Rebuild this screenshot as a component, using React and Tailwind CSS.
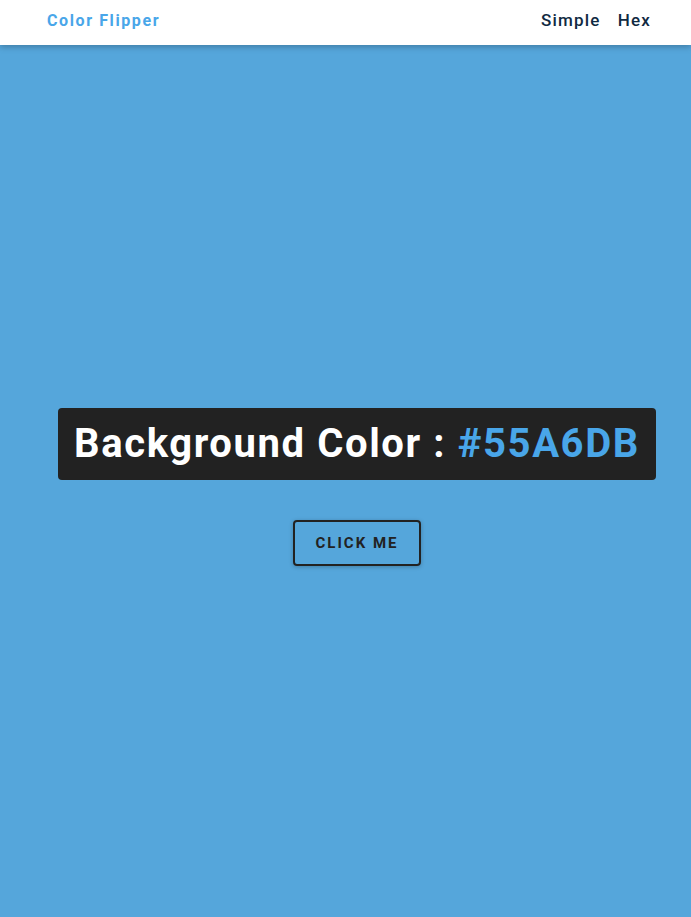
import React, { useState } from "react";

const App = () => {
  const [color] = useState("#55A6DB");

  return (
    <div
      className="min-h-screen w-full bg-[#55A6DB]"
      style={{ fontFamily: "Roboto, 'Open Sans', sans-serif" }}
    >
      {/* Navbar */}
      <nav className="h-[45px] bg-white shadow-[0_2px_6px_rgba(0,0,0,0.25)] flex items-center justify-between pl-[47px] pr-[40px] pb-[3px] relative z-10">
        <h4 className="text-[16px] font-bold tracking-[1.6px] text-[#49A6E9]">
          Color Flipper
        </h4>
        <ul className="flex items-center gap-[17px]">
          <li className="text-[17px] font-medium tracking-[1.2px] text-[#102A42]">Simple</li>
          <li className="text-[17px] font-medium tracking-[1.2px] text-[#102A42]">Hex</li>
        </ul>
      </nav>

      {/* Main */}
      <main className="flex flex-col items-center pt-[363px] pl-[23px]">
        <h2 className="h-[72px] flex items-center px-[16px] bg-[#222222] rounded-[4px] text-[40px] font-bold tracking-[1.6px] text-white">
          Background Color :&nbsp;<span className="text-[#49A6E9]">{color}</span>
        </h2>
        <button className="mt-[40px] w-[128px] h-[46px] border-2 border-[#222222] rounded-[4px] text-[15px] font-bold tracking-[2px] uppercase text-[#222222] shadow-[0_1px_4px_rgba(0,0,0,0.25)]">
          click me
        </button>
      </main>
    </div>
  );
};

export default App;
